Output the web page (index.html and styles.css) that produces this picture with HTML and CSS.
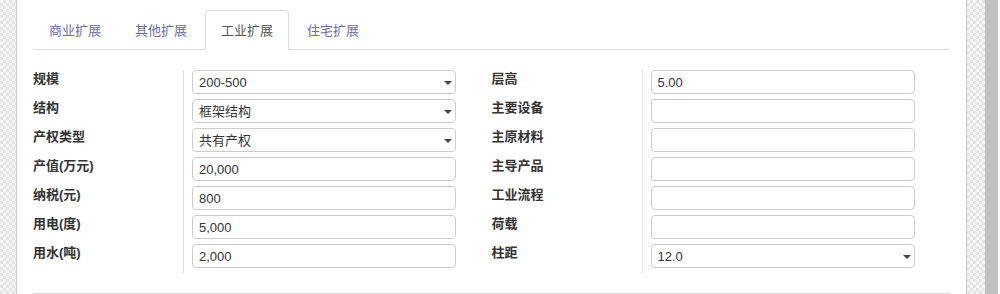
FILE: index.html
```html
<!DOCTYPE html>
<html lang="zh-CN">
<head>
  <meta charset="UTF-8">
  <title>工业扩展</title>
  <link rel="stylesheet" href="styles.css">
</head>
<body>
  <div class="edge edge-left"></div>
  <div class="panel">
    <ul class="tabs">
      <li class="tab">商业扩展</li>
      <li class="tab">其他扩展</li>
      <li class="tab active">工业扩展</li>
      <li class="tab">住宅扩展</li>
    </ul>
    <div class="form">
      <div class="group">
        <div class="labels">
          <div class="label">规模</div>
          <div class="label">结构</div>
          <div class="label">产权类型</div>
          <div class="label">产值(万元)</div>
          <div class="label">纳税(元)</div>
          <div class="label">用电(度)</div>
          <div class="label">用水(吨)</div>
        </div>
        <div class="fields">
          <div class="field select">200-500<span class="caret"></span></div>
          <div class="field select">框架结构<span class="caret"></span></div>
          <div class="field select">共有产权<span class="caret"></span></div>
          <div class="field">20,000</div>
          <div class="field">800</div>
          <div class="field">5,000</div>
          <div class="field">2,000</div>
        </div>
      </div>
      <div class="group">
        <div class="labels">
          <div class="label">层高</div>
          <div class="label">主要设备</div>
          <div class="label">主原材料</div>
          <div class="label">主导产品</div>
          <div class="label">工业流程</div>
          <div class="label">荷载</div>
          <div class="label">柱距</div>
        </div>
        <div class="fields">
          <div class="field">5.00</div>
          <div class="field"></div>
          <div class="field"></div>
          <div class="field"></div>
          <div class="field"></div>
          <div class="field"></div>
          <div class="field select">12.0<span class="caret"></span></div>
        </div>
      </div>
    </div>
    <div class="footer-line"></div>
  </div>
  <div class="edge edge-right"></div>
  <div class="scrollbar"></div>
</body>
</html>
```

FILE: styles.css
```css
body {
  margin: 0;
  height: 294px;
  display: flex;
  overflow: hidden;
  background-color: #ffffff;
  font-family: 'Liberation Sans', 'Noto Sans CJK SC', sans-serif;
  font-size: 13px;
  color: #333;
}
.edge {
  background-color: #f4f4f4;
  background-image:
    linear-gradient(45deg, #e4e4e4 25%, transparent 25%, transparent 75%, #e4e4e4 75%),
    linear-gradient(45deg, #e4e4e4 25%, transparent 25%, transparent 75%, #e4e4e4 75%);
  background-size: 6px 6px;
  background-position: 0 0, 3px 3px;
}
.edge-left {
  width: 16px;
}
.edge-right {
  width: 18px;
}
.scrollbar {
  width: 13px;
  background-color: #c1c1c1;
}
.panel {
  width: 951px;
  border-left: 1px solid #c9c9d9;
  border-right: 1px solid #c9c9d9;
  padding: 0 16px;
  box-sizing: border-box;
  background-color: #fff;
}

/* tabs */
.tabs {
  list-style: none;
  margin: 0;
  padding: 10px 0 0 0;
  display: flex;
  border-bottom: 1px solid #ddd;
}
.tab {
  height: 40px;
  line-height: 37px;
  padding: 0 15px;
  margin: 0 2px -1px 0;
  border: 1px solid transparent;
  border-radius: 4px 4px 0 0;
  box-sizing: border-box;
  color: #6b6ba8;
  font-family: 'Noto Sans CJK SC', sans-serif;
  font-size: 13px;
}
.tab.active {
  color: #555;
  background-color: #fff;
  border-color: #ddd;
  border-bottom-color: #fff;
}

/* form */
.form {
  display: grid;
  grid-template-columns: 1fr 1fr;
  padding-top: 20px;
}
.group {
  display: flex;
}
.labels {
  width: 150px;
}
.label {
  height: 29px;
  line-height: 17px;
  font-weight: bold;
  color: #333;
}
.fields {
  border-left: 1px solid #e3e3e3;
  padding-left: 8px;
}
.field {
  position: relative;
  width: 264px;
  height: 24px;
  margin-bottom: 5px;
  padding: 0 6px;
  line-height: 23px;
  border: 1px solid #ccc;
  border-radius: 4px;
  box-sizing: border-box;
  color: #333;
}
.caret {
  position: absolute;
  right: 3px;
  top: 10px;
  width: 0;
  height: 0;
  border-left: 4px solid transparent;
  border-right: 4px solid transparent;
  border-top: 4px solid #444;
}
.footer-line {
  margin-top: 20px;
  border-top: 1px solid #ddd;
}
```
